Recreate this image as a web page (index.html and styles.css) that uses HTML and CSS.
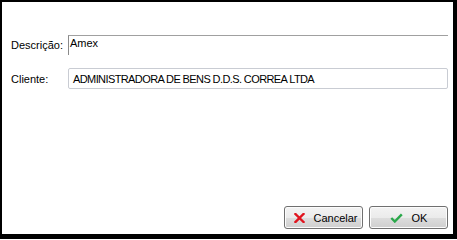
FILE: index.html
```
<!DOCTYPE html>
<html>
<head>
<meta charset="utf-8">
<link rel="stylesheet" href="styles.css">
</head>
<body>
<div class="frame">
  <div class="form">
    <div class="row row-desc">
      <label class="label">Descrição:</label>
      <div class="memo">Amex</div>
    </div>
    <div class="row row-cli">
      <label class="label">Cliente:</label>
      <div class="edit">ADMINISTRADORA DE BENS D.D.S. CORREA LTDA</div>
    </div>
  </div>
  <div class="buttons">
    <button class="btn btn-cancel">
      <svg class="ico" width="11" height="10" viewBox="0 0 11 10"><path d="M1.5 1 L9.5 9 M9.5 1 L1.5 9" stroke="#e0141e" stroke-width="2.4" stroke-linecap="square" fill="none"/></svg>
      <span>Cancelar</span>
    </button>
    <button class="btn btn-ok">
      <svg class="ico" width="13" height="10" viewBox="0 0 13 10"><path d="M1.3 5 L4.8 8.5 L11.8 1.3" stroke="#2aa84a" stroke-width="2.4" fill="none"/></svg>
      <span>OK</span>
    </button>
  </div>
</div>
</body>
</html>
```
FILE: styles.css
```
* { box-sizing: border-box; }
html, body { margin: 0; padding: 0; background: #fff; }
body { font-family: "Liberation Sans", Arial, sans-serif; font-size: 11px; color: #000; }
.frame {
  width: 457px;
  height: 239px;
  border-style: solid;
  border-color: #000;
  border-width: 2px 4px 5px 2px;
  background: #fff;
  display: flex;
  flex-direction: column;
  justify-content: space-between;
}
.form { padding: 33px 0 0 9px; display: flex; flex-direction: column; gap: 13px; }
.row { display: flex; align-items: center; }
.label { width: 57px; line-height: 13px; }
.row-cli .label { padding-top: 2px; }
.memo {
  width: 380px;
  height: 20px;
  border-top: 1px solid #a0a0a0;
  border-left: 1px solid #8a8a8a;
  padding: 1px 0 0 1px;
  line-height: 13px;
}
.edit {
  width: 380px;
  height: 21px;
  border: 1px solid #c9ccd3;
  border-radius: 2px;
  padding: 2px 0 0 4px;
  line-height: 17px;
  letter-spacing: -0.6px;
}
.buttons { display: flex; justify-content: flex-end; gap: 6px; padding: 0 5px 5px 0; }
.btn {
  width: 79px;
  height: 23px;
  border: 1px solid #707070;
  border-radius: 3px;
  background: linear-gradient(#f3f3f3 0%, #ebebeb 50%, #dddddd 51%, #cfcfcf 100%);
  box-shadow: inset 0 0 0 1px #fcfcfc;
  font-family: "Liberation Sans", Arial, sans-serif;
  font-size: 11px;
  color: #000;
  display: flex;
  align-items: center;
  justify-content: center;
  padding: 0;
  margin: 0;
}
.btn-cancel { gap: 8px; padding-left: 5px; }
.btn-ok { gap: 9px; }
.ico { display: block; }
```
